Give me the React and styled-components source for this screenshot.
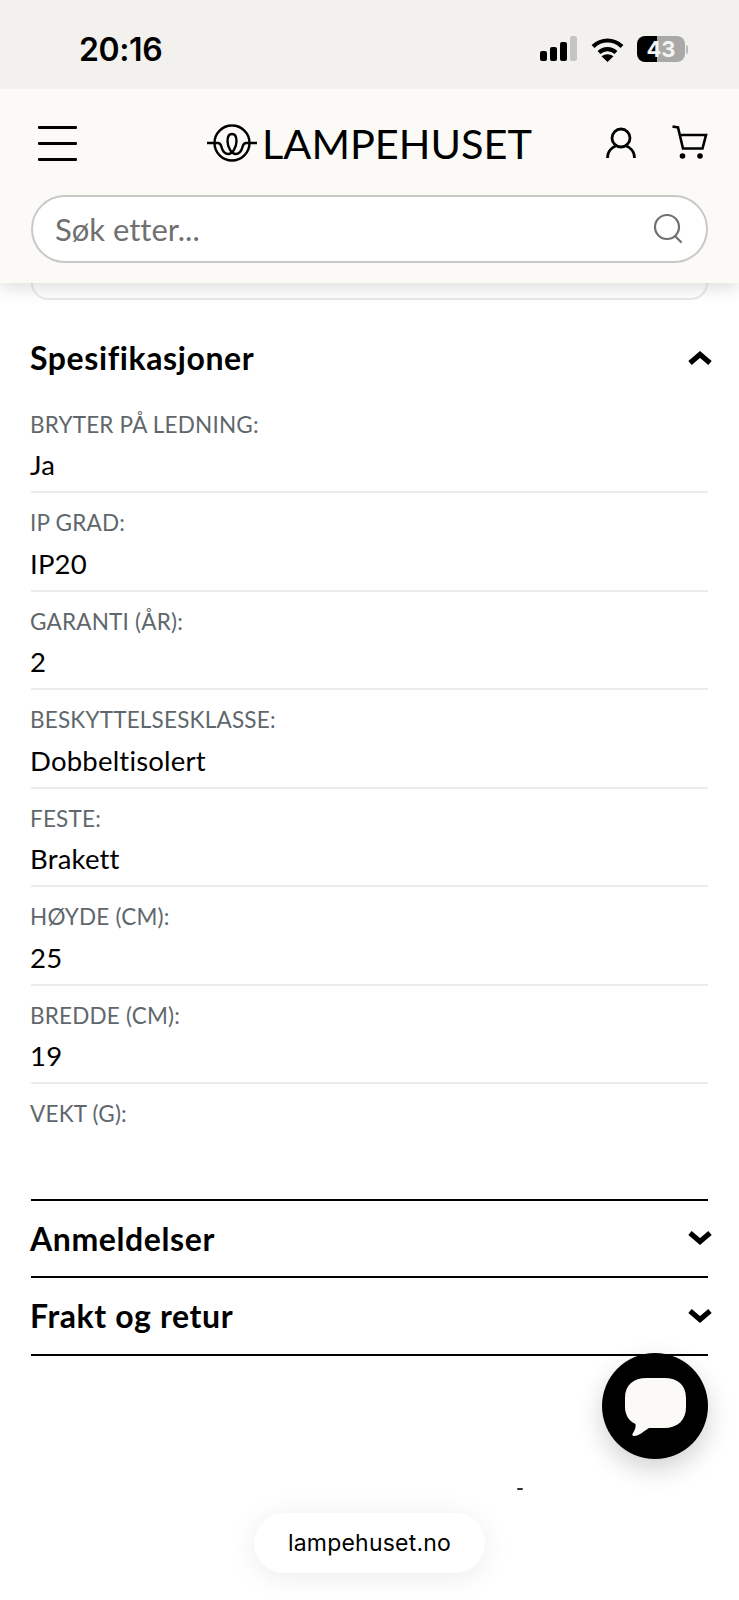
import styled, { createGlobalStyle } from "styled-components";

const specs = [
  ["BRYTER PÅ LEDNING:", "Ja"],
  ["IP GRAD:", "IP20"],
  ["GARANTI (ÅR):", "2"],
  ["BESKYTTELSESKLASSE:", "Dobbeltisolert"],
  ["FESTE:", "Brakett"],
  ["HØYDE (CM):", "25"],
  ["BREDDE (CM):", "19"],
  ["VEKT (G):", ""],
];

const Chevron = ({ up }) => (
  <ChevronSvg viewBox="0 0 26 18" $up={up}>
    <path d="M3 4l10 8.500L23 4" fill="none" stroke="#000" strokeWidth="5.200" />
  </ChevronSvg>
);

const App = () => {
  return (
    <Page>
      <GlobalStyle />
      <StatusBar>
        <Time>20:16</Time>
        <StatusIcons>
          <svg width="38" height="26" viewBox="0 0 38 26">
            <rect x="0" y="15" width="7" height="10" rx="2" fill="#000" />
            <rect x="10" y="11" width="7" height="14" rx="2" fill="#000" />
            <rect x="20" y="6" width="7" height="19" rx="2" fill="#000" />
            <rect x="30" y="0" width="7" height="25" rx="2" fill="#c4c4c2" />
          </svg>
          <svg width="33" height="25" viewBox="0 0 33 25">
            <path d="M2 9.500C10.500 1.500 22.500 1.500 31 9.500" fill="none" stroke="#000" strokeWidth="4.200" />
            <path d="M8 15.500C13 11 20 11 25 15.500" fill="none" stroke="#000" strokeWidth="4.200" />
            <path d="M16.500 25l-6-5.800c3.500-2.700 8.500-2.700 12 0z" fill="#000" />
          </svg>
          <Battery>
            <BatteryCell>43</BatteryCell>
            <BatteryNub />
          </Battery>
        </StatusIcons>
      </StatusBar>

      <Header>
        <TopRow>
          <MenuButton>
            <span />
            <span />
            <span />
          </MenuButton>
          <Logo>
            <svg width="50" height="38" viewBox="0 0 50 38">
              <circle cx="25" cy="19" r="17.500" fill="none" stroke="#000" strokeWidth="2.400" />
              <path
                d="M0 19H11c2.500 0 3 2 3.500 4C15.500 27 18 30 21.500 30C25 30 29.500 24 29.500 17C29.500 12 27.500 10 25 10C22.500 10 20.500 12 20.500 17C20.500 24 25 30 28.500 30C32 30 34.500 27 35.500 23C36 21 36.500 19 39 19H50"
                fill="none"
                stroke="#000"
                strokeWidth="2.400"
              />
            </svg>
            <LogoText>LAMPEHUSET</LogoText>
          </Logo>
          <HeaderIcons>
            <svg width="30" height="32" viewBox="0 0 30 32">
              <circle cx="15" cy="11" r="9" fill="none" stroke="#000" strokeWidth="2.800" />
              <path d="M1.500 31c0-7 5-11 9.500-12.500M28.500 31c0-7-5-11-9.500-12.500" fill="none" stroke="#000" strokeWidth="2.800" />
            </svg>
            <svg width="36" height="36" viewBox="0 0 36 36">
              <path d="M0.500 1.500L6 2.500L11 23.500H30.500L34 10H7.500" fill="none" stroke="#000" strokeWidth="2.600" />
              <circle cx="10.500" cy="31" r="2.800" fill="#000" />
              <circle cx="28" cy="31" r="2.800" fill="#000" />
            </svg>
          </HeaderIcons>
        </TopRow>
        <SearchBox>
          <Placeholder>Søk etter...</Placeholder>
          <svg width="32" height="32" viewBox="0 0 32 32">
            <circle cx="15" cy="14" r="12" fill="none" stroke="#707070" strokeWidth="2.200" />
            <path d="M24 24l5 5" stroke="#707070" strokeWidth="2.200" strokeLinecap="round" />
          </svg>
        </SearchBox>
      </Header>

      <CardRemnant />

      <Content>
        <SectionHead>
          <SectionTitle>Spesifikasjoner</SectionTitle>
          <Chevron up />
        </SectionHead>
        {specs.map(([label, value], i) => (
          <SpecRow key={label} $last={i === specs.length - 1}>
            <SpecLabel>{label}</SpecLabel>
            <SpecValue>{value}</SpecValue>
          </SpecRow>
        ))}
        <Accordion>
          <SectionTitle>Anmeldelser</SectionTitle>
          <Chevron />
        </Accordion>
        <Accordion>
          <SectionTitle>Frakt og retur</SectionTitle>
          <Chevron />
        </Accordion>
      </Content>

      <ChatButton>
        <svg width="61" height="58" viewBox="0 0 61 58">
          <path
            d="M22 0H39C53 0 61 7 61 20V29C61 42 53 50 39 50H24C19 53 14 58 9 58C7 58 7 56 8 55C10 52 11 49 10.500 46C4 43 0 37 0 29V20C0 7 8 0 22 0Z"
            fill="#fbfaf7"
          />
        </svg>
      </ChatButton>
      <StrayMark />
      <UrlPill>lampehuset.no</UrlPill>
    </Page>
  );
};

const GlobalStyle = createGlobalStyle`
  html, body {
    margin: 0;
    padding: 0;
    background: #fff;
  }
`;

const Page = styled.div`
  position: relative;
  width: 739px;
  height: 1600px;
  overflow: hidden;
  background: #fff;
  font-family: "Lato", "Liberation Sans", sans-serif;
  font-variant-ligatures: none;
  color: #000;
`;

const StatusBar = styled.div`
  height: 89px;
  box-sizing: border-box;
  padding: 9px 51px 0 79px;
  display: flex;
  align-items: center;
  justify-content: space-between;
  background: #f2f1ee;
  position: relative;
  z-index: 3;
`;

const Time = styled.div`
  font-family: "Inter", sans-serif;
  font-size: 32px;
  font-weight: 600;
  letter-spacing: -0.4px;
`;

const StatusIcons = styled.div`
  display: flex;
  align-items: center;
  gap: 13px;
`;

const Battery = styled.div`
  display: flex;
  align-items: center;
  gap: 1px;
`;

const BatteryCell = styled.div`
  width: 48px;
  height: 26px;
  border-radius: 8px;
  background: linear-gradient(90deg, #000 0 42%, #a9a9a8 42% 100%);
  color: #f4f4f2;
  font-family: "Inter", sans-serif;
  font-size: 22px;
  font-weight: 700;
  line-height: 26px;
  text-align: center;
`;

const BatteryNub = styled.div`
  width: 2px;
  height: 9px;
  border-radius: 0 2px 2px 0;
  background: #bbbbb9;
`;

const Header = styled.header`
  position: relative;
  z-index: 2;
  height: 194px;
  box-sizing: border-box;
  padding: 34px 31px 0 31px;
  background: #fbfaf7;
  box-shadow: 0 6px 16px rgba(0, 0, 0, 0.12);
`;

const TopRow = styled.div`
  height: 40px;
  display: flex;
  align-items: center;
`;

const MenuButton = styled.div`
  width: 39px;
  margin-left: 7px;
  height: 35px;
  display: flex;
  flex-direction: column;
  justify-content: space-between;

  span {
    display: block;
    height: 3px;
    border-radius: 1px;
    background: #000;
  }
`;

const Logo = styled.div`
  margin-left: 130px;
  display: flex;
  align-items: center;
  gap: 5px;
`;

const LogoText = styled.span`
  font-size: 41.500px;
  font-weight: 400;
  line-height: 40px;
`;

const HeaderIcons = styled.div`
  margin-left: auto;
  display: flex;
  align-items: center;
  gap: 36px;
`;

const SearchBox = styled.div`
  margin-top: 32px;
  height: 68px;
  box-sizing: border-box;
  padding: 0 22px;
  display: flex;
  align-items: center;
  justify-content: space-between;
  background: #fff;
  border: 2px solid #c8c8c6;
  border-radius: 34px;
`;

const Placeholder = styled.span`
  font-size: 31px;
  color: #707070;
`;

const CardRemnant = styled.div`
  height: 17px;
  margin: 0 31px;
  box-sizing: border-box;
  border: 2px solid #e9e9e9;
  border-top: 0;
  border-radius: 0 0 22px 22px;
`;

const Content = styled.div`
  padding: 0 31px;
`;

const SectionHead = styled.div`
  height: 94.500px;
  padding-top: 21px;
  box-sizing: border-box;
  display: flex;
  align-items: center;
  justify-content: space-between;
`;

const SectionTitle = styled.h2`
  margin: 0 0 0 -1px;
  font-size: 32px;
  font-weight: 700;
  letter-spacing: 0.6px;
`;

const ChevronSvg = styled.svg`
  width: 26px;
  height: 18px;
  margin-right: -5px;
  transform: ${({ $up }) => ($up ? "rotate(180deg)" : "none")};
`;

const SpecRow = styled.div`
  height: ${({ $last }) => ($last ? "116.500px" : "98.500px")};
  box-sizing: border-box;
  padding-top: 14px;
  border-bottom: 2px solid ${({ $last }) => ($last ? "#000" : "#ececec")};
`;

const SpecLabel = styled.div`
  height: 32px;
  margin-left: -1px;
  line-height: 32px;
  font-size: 22.500px;
  letter-spacing: 0.2px;
  color: #60676c;
`;

const SpecValue = styled.div`
  height: 42px;
  margin: 3.500px 0 0 -1px;
  line-height: 42px;
  font-size: 27.500px;
  letter-spacing: 0.2px;
`;

const Accordion = styled.div`
  height: 77.500px;
  box-sizing: border-box;
  display: flex;
  align-items: center;
  justify-content: space-between;
  border-bottom: 2px solid #000;
`;

const ChatButton = styled.div`
  position: absolute;
  left: 602px;
  top: 1353px;
  width: 106px;
  height: 106px;
  border-radius: 50%;
  background: #000;
  display: flex;
  align-items: center;
  justify-content: center;
  box-shadow: 0 10px 26px rgba(0, 0, 0, 0.18);

  svg {
    margin-top: 2px;
  }
`;

const StrayMark = styled.div`
  position: absolute;
  left: 517px;
  top: 1488px;
  width: 6px;
  height: 2px;
  border-radius: 1px;
  background: #333;
  filter: blur(0.4px);
`;

const UrlPill = styled.div`
  position: absolute;
  left: 254px;
  top: 1513px;
  width: 231px;
  height: 60px;
  border-radius: 30px;
  background: #fff;
  box-shadow: 0 4px 30px rgba(0, 0, 0, 0.08);
  font-family: "Inter", sans-serif;
  font-size: 23px;
  letter-spacing: 0.2px;
  line-height: 60px;
  text-align: center;
`;

export default App;
